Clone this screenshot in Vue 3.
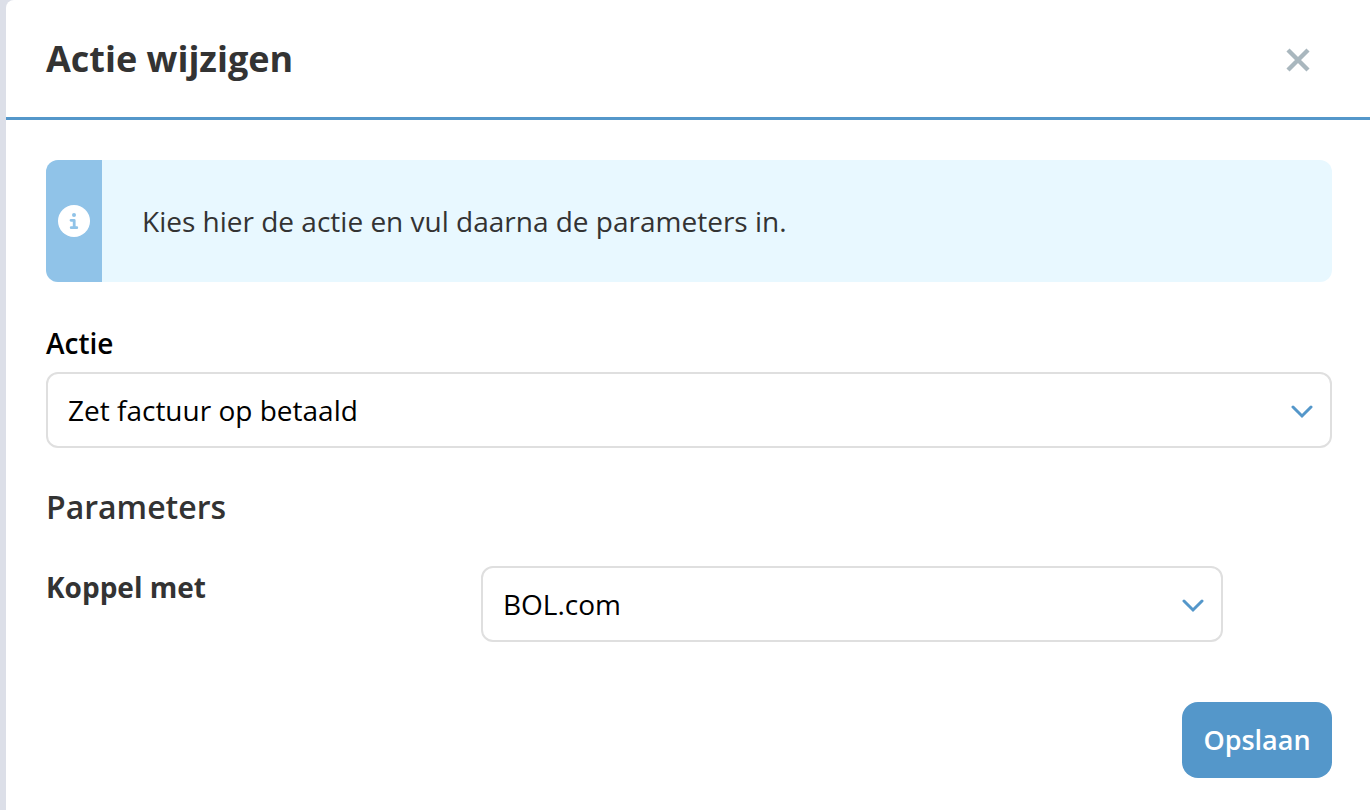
<script setup>
import { ref } from 'vue'

const action = ref('Zet factuur op betaald')
const link = ref('BOL.com')
</script>

<template>
  <div class="backdrop">
    <section class="dialog" role="dialog" aria-labelledby="dialog-title">
      <header class="header">
        <h1 id="dialog-title">Actie wijzigen</h1>
        <button class="close" type="button" aria-label="Sluiten">
          <svg width="24" height="24" viewBox="0 0 24 24" aria-hidden="true">
            <path d="M2 2 22 22M22 2 2 22" fill="none" stroke="#a9b7be" stroke-width="4.4" />
          </svg>
        </button>
      </header>
      <form class="body" @submit.prevent>
        <div class="notice">
          <div class="notice-icon">
            <svg width="32" height="32" viewBox="0 0 32 32" aria-hidden="true">
              <circle cx="16" cy="16" r="16" fill="#fff" />
              <circle cx="16" cy="10" r="2" fill="#90c3e8" />
              <path d="M13 15.3h3.2v7.4M13.2 22.7h5.6" fill="none" stroke="#90c3e8" stroke-width="2.8" stroke-linecap="round" stroke-linejoin="round" />
            </svg>
          </div>
          <p>Kies hier de actie en vul daarna de parameters in.</p>
        </div>
        <label class="action-label" for="action">Actie</label>
        <div class="select">
          <select id="action" v-model="action">
            <option>Zet factuur op betaald</option>
          </select>
          <svg class="chevron" width="22" height="14" viewBox="0 0 22 14" aria-hidden="true">
            <path d="M2 2 11 11 20 2" fill="none" stroke="#5497ca" stroke-width="3" stroke-linecap="round" />
          </svg>
        </div>
        <h2>Parameters</h2>
        <div class="row">
          <label for="link">Koppel met</label>
          <div class="select">
            <select id="link" v-model="link">
              <option>BOL.com</option>
            </select>
            <svg class="chevron" width="22" height="14" viewBox="0 0 22 14" aria-hidden="true">
              <path d="M2 2 11 11 20 2" fill="none" stroke="#5497ca" stroke-width="3" stroke-linecap="round" />
            </svg>
          </div>
        </div>
        <div class="footer">
          <button class="save" type="submit">Opslaan</button>
        </div>
      </form>
    </section>
  </div>
</template>

<style>
body {
  background: #dcdfe8;
}
</style>

<style scoped>
.backdrop {
  min-height: 100vh;
  padding-left: 6px;
  box-sizing: border-box;
  display: flex;
  background: #dcdfe8;
  font-family: "Open Sans", "Noto Sans", sans-serif;
  font-size: 28px;
  line-height: 40px;
  color: #333;
}
.dialog {
  flex: 1;
  background: #fff;
  border-top-left-radius: 8px;
}
.header {
  display: flex;
  align-items: center;
  justify-content: space-between;
  padding: 34px 56px 33px 40px;
  border-bottom: 3px solid #5497ca;
}
h1 {
  margin: 0;
  font-size: 36px;
  line-height: 50px;
  font-weight: 700;
}
.close {
  display: flex;
  padding: 6px 4px 4px;
  border: 0;
  background: none;
}
.body {
  padding: 40px 38px 32px 40px;
}
.notice {
  display: flex;
  border-radius: 12px;
  overflow: hidden;
  background: #e8f8ff;
}
.notice-icon {
  display: flex;
  align-items: center;
  justify-content: center;
  width: 56px;
  background: #90c3e8;
}
.notice p {
  margin: 0;
  padding: 41px 40px;
}
.action-label {
  display: block;
  margin-top: 41px;
  margin-bottom: 9px;
  font-weight: 600;
  color: #000;
}
.select {
  position: relative;
}
select {
  display: block;
  width: 100%;
  height: 76px;
  padding: 0 60px 0 20px;
  border: 2px solid #dfdfdf;
  border-radius: 12px;
  appearance: none;
  background: #fff;
  color: #000;
  font: inherit;
}
.chevron {
  position: absolute;
  right: 19px;
  top: 33px;
  pointer-events: none;
}
h2 {
  margin: 37px 0;
  font-size: 32px;
  line-height: 44px;
  font-weight: 600;
}
.row {
  display: grid;
  grid-template-columns: 435px 1fr;
  padding-right: 109px;
  font-weight: 700;
  line-height: 42px;
}
.row select {
  font-weight: 400;
}
.footer {
  display: flex;
  justify-content: flex-end;
  margin-top: 60px;
}
.save {
  min-width: 150px;
  height: 76px;
  padding: 0 20px;
  border: 0;
  border-radius: 16px;
  background: #5497ca;
  color: #fff;
  font: inherit;
  font-size: 27px;
  font-weight: 600;
}
</style>
